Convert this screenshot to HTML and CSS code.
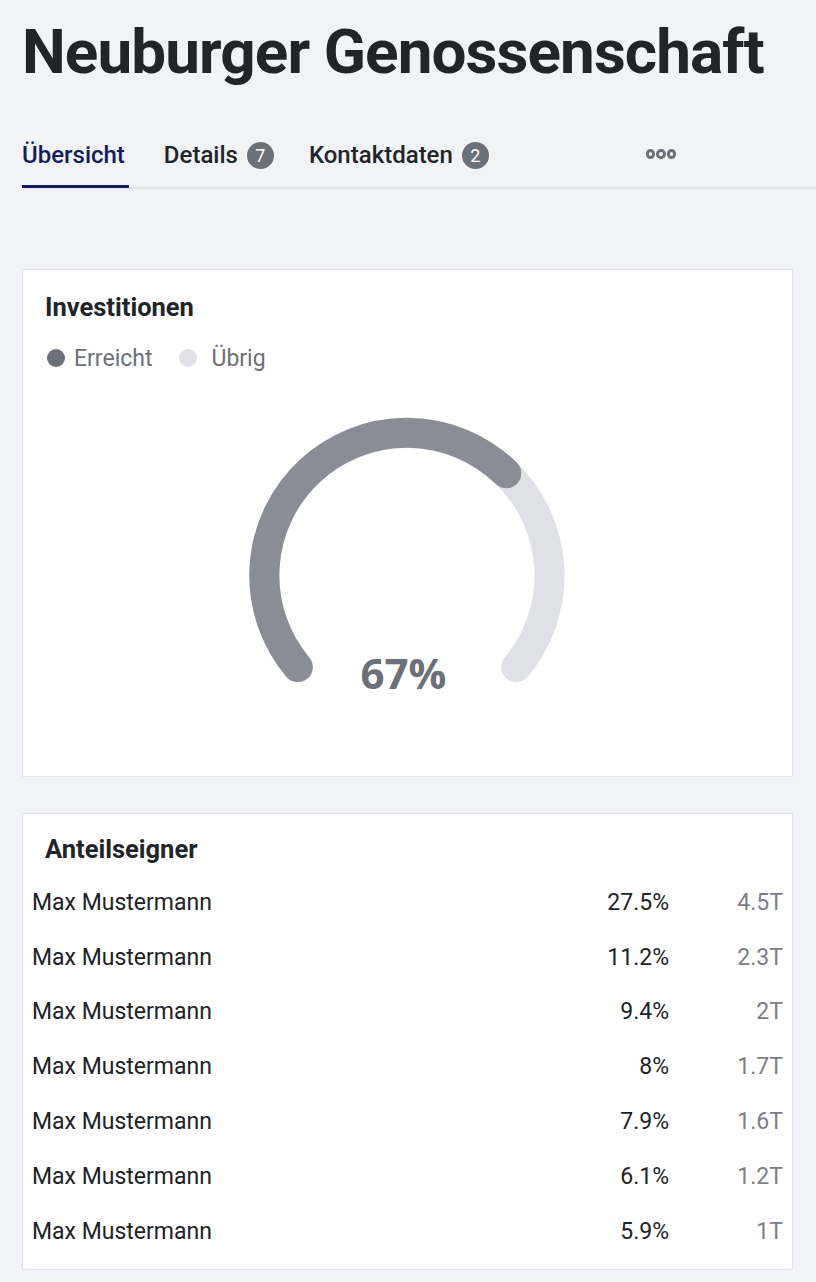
FILE: index.html
```html
<!DOCTYPE html>
<html lang="de">
<head>
<meta charset="utf-8">
<link rel="stylesheet" href="styles.css">
</head>
<body>
<main class="page">
  <h1 class="title">Neuburger Genossenschaft</h1>
  <nav class="tabs">
    <a class="tab active">Übersicht</a>
    <a class="tab">Details <span class="badge">7</span></a>
    <a class="tab">Kontaktdaten <span class="badge">2</span></a>
    <span class="more"><i></i><i></i><i></i></span>
  </nav>

  <section class="card invest">
    <h2 class="card-title">Investitionen</h2>
    <div class="legend">
      <span class="legend-item"><span class="dot dark"></span>Erreicht</span>
      <span class="legend-item"><span class="dot light"></span><span class="legend-label-rest">Übrig</span></span>
    </div>
    <div class="gauge">
      <svg width="340" height="320" viewBox="237.5 400 340 320">
        <path d="M298.3 667.1 A142.5 142.5 0 1 1 516.7 667.1" fill="none" stroke="#dfe1e6" stroke-width="30" stroke-linecap="round"/>
        <path d="M298.3 667.1 A142.5 142.5 0 0 1 506.8 473.3" fill="none" stroke="#8a8d95" stroke-width="30" stroke-linecap="round"/>
        <text x="404" y="689" text-anchor="middle" class="gauge-value">67%</text>
      </svg>
    </div>
  </section>

  <section class="card owners">
    <h2 class="card-title">Anteilseigner</h2>
    <div class="rows">
      <div class="row"><span class="name">Max Mustermann</span><span class="pct">27.5%</span><span class="amt">4.5T</span></div>
      <div class="row"><span class="name">Max Mustermann</span><span class="pct">11.2%</span><span class="amt">2.3T</span></div>
      <div class="row"><span class="name">Max Mustermann</span><span class="pct">9.4%</span><span class="amt">2T</span></div>
      <div class="row"><span class="name">Max Mustermann</span><span class="pct">8%</span><span class="amt">1.7T</span></div>
      <div class="row"><span class="name">Max Mustermann</span><span class="pct">7.9%</span><span class="amt">1.6T</span></div>
      <div class="row"><span class="name">Max Mustermann</span><span class="pct">6.1%</span><span class="amt">1.2T</span></div>
      <div class="row"><span class="name">Max Mustermann</span><span class="pct">5.9%</span><span class="amt">1T</span></div>
    </div>
  </section>
</main>
</body>
</html>
```

FILE: styles.css
```css
* { box-sizing: border-box; }
html, body { margin: 0; padding: 0; background: #f2f3f7; }
body { font-family: Roboto, "Liberation Sans", sans-serif; color: #202326; }
.page { padding: 14px 0 0 22px; }

.title {
  margin: 0;
  font-size: 62px;
  line-height: 76px;
  font-weight: 700;
  color: #212529;
  letter-spacing: -0.9px;
}

.tabs {
  display: flex;
  align-items: center;
  height: 99px;
  padding-top: 34px;
  border-bottom: 2px solid #e2e4e9;
}
.tab {
  display: flex;
  align-items: center;
  gap: 9px;
  height: 63px;
  font-size: 24px;
  font-weight: 500;
  color: #212529;
  margin-right: 35px;
  border-bottom: 3px solid transparent;
  margin-bottom: -2px;
}
.tab.active { color: #131c5c; border-bottom-color: #131c5c; padding-right: 4px; margin-right: 35px; }
.badge {
  display: inline-flex;
  align-items: center;
  justify-content: center;
  width: 27px;
  height: 27px;
  border-radius: 50%;
  background: #6c7079;
  color: #fff;
  font-size: 18px;
  font-weight: 400;
}
.more { display: flex; gap: 1px; margin-left: 122px; margin-bottom: 3px; }
.more i {
  width: 9.5px; height: 9.5px; border-radius: 50%;
  border: 3px solid #6c7079;
}

.card {
  background: #fff;
  border: 1px solid #e1e3e8;
  width: 771px;
}
.invest { margin-top: 80px; height: 508px; padding: 22px 22px 0 22px; }
.card-title { margin: 0; font-size: 25.5px; line-height: 30px; font-weight: 700; color: #212529; }
.legend { display: flex; gap: 27px; margin-top: 20px; padding-left: 2px; height: 32px; }
.legend-item { display: flex; align-items: center; gap: 9px; font-size: 23px; color: #6c7079; }
.legend-label-rest { margin-left: 5px; }
.dot { width: 18px; height: 18px; border-radius: 50%; }
.dot.dark { background: #6c7079; }
.dot.light { background: #e0e2e7; }
.gauge { display: flex; justify-content: center; margin-top: 26px; margin-left: -1px; }
.gauge svg { display: block; }
.gauge-value { font-family: "Open Sans", sans-serif; font-weight: 700; font-size: 42px; fill: #6c7079; }

.owners { margin-top: 36px; height: 457px; padding: 20px 9px 0 9px; }
.owners .card-title { padding-left: 13px; }
.rows { margin-top: 11px; }
.row { display: flex; align-items: center; height: 54.8px; font-size: 23px; }
.name { flex: 1; color: #202326; }
.pct { width: 80px; text-align: right; color: #202326; }
.amt { width: 114px; text-align: right; color: #7b7e86; }
```
